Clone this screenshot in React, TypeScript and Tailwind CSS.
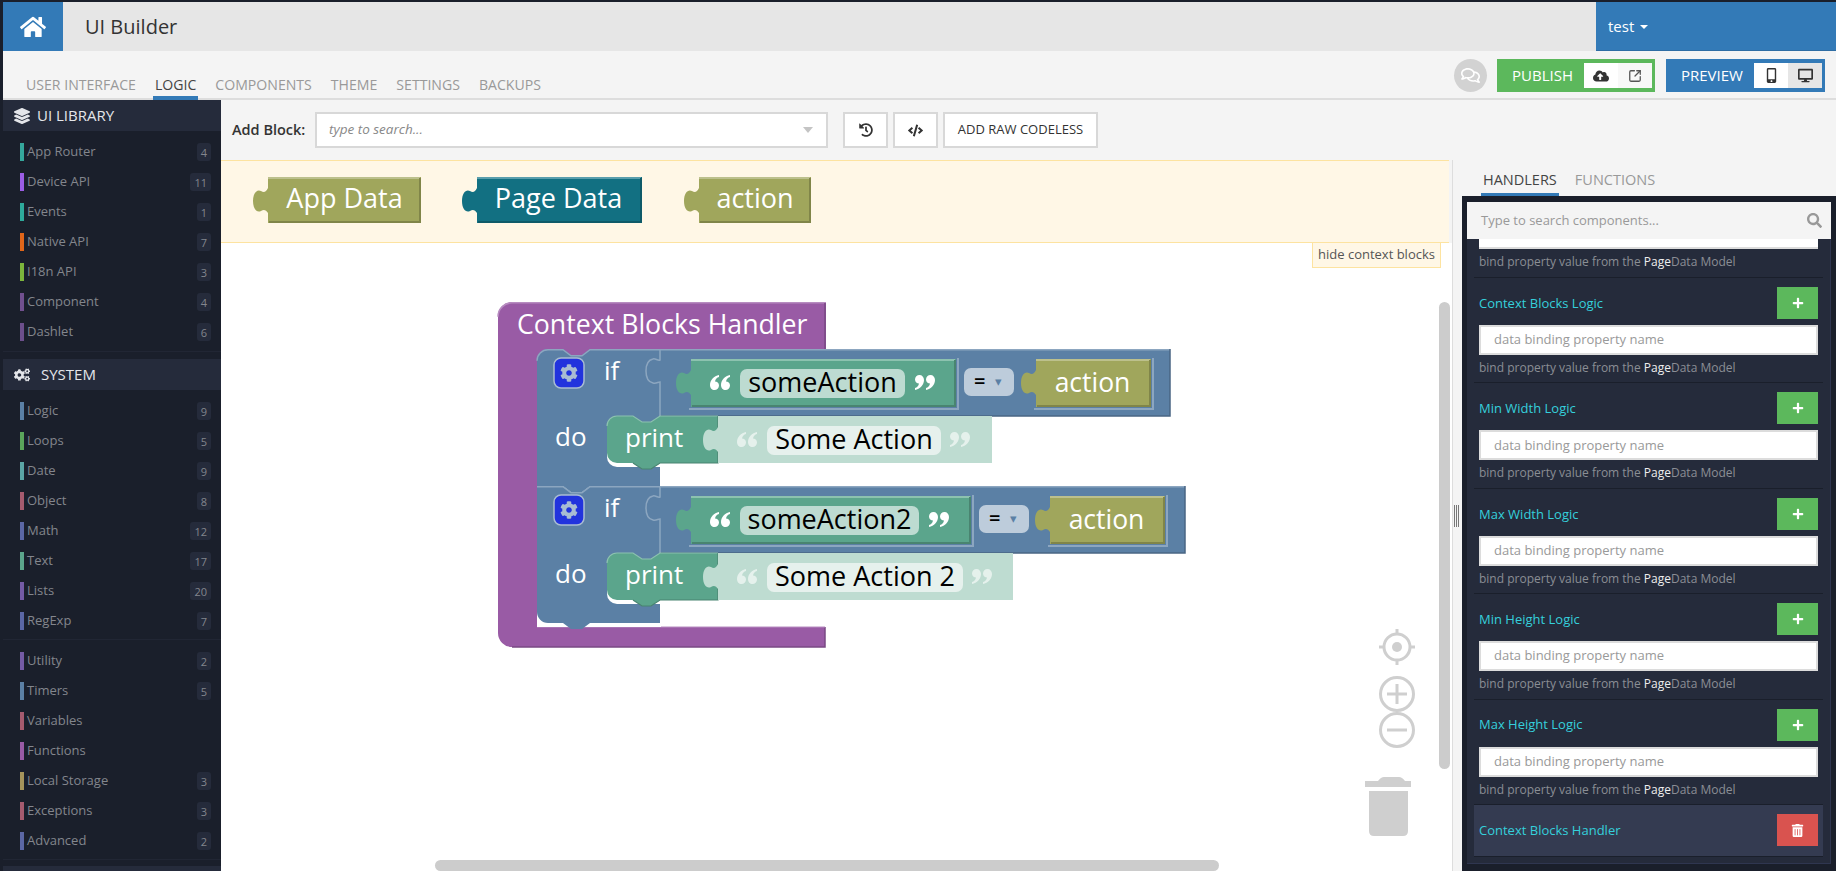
import React from "react";
import {
  FaHome, FaLayerGroup, FaCogs, FaRegComments, FaCloudUploadAlt, FaMobileAlt, FaDesktop,
  FaHistory, FaCode, FaPlus, FaTrashAlt, FaSearch,
} from "react-icons/fa";
import { SquareArrowOutUpRight } from "lucide-react";

const lib = [
  { n: "App Router", b: "4", c: "bg-[#35a79c]" },
  { n: "Device API", b: "11", c: "bg-[#9b5de5]" },
  { n: "Events", b: "1", c: "bg-[#2ea99b]" },
  { n: "Native API", b: "7", c: "bg-[#e0661a]" },
  { n: "I18n API", b: "3", c: "bg-[#7cb53c]" },
  { n: "Component", b: "4", c: "bg-[#71508f]" },
  { n: "Dashlet", b: "6", c: "bg-[#6c4f8c]" },
];
const sys1 = [
  { n: "Logic", b: "9", c: "bg-[#5b80a5]" },
  { n: "Loops", b: "5", c: "bg-[#5ba55b]" },
  { n: "Date", b: "9", c: "bg-[#5ba5a5]" },
  { n: "Object", b: "8", c: "bg-[#a55b6f]" },
  { n: "Math", b: "12", c: "bg-[#5b67a5]" },
  { n: "Text", b: "17", c: "bg-[#5ba58c]" },
  { n: "Lists", b: "20", c: "bg-[#745ba5]" },
  { n: "RegExp", b: "7", c: "bg-[#5b67a5]" },
];
const sys2 = [
  { n: "Utility", b: "2", c: "bg-[#745ba5]" },
  { n: "Timers", b: "5", c: "bg-[#5b80a5]" },
  { n: "Variables", b: "", c: "bg-[#a55b6f]" },
  { n: "Functions", b: "", c: "bg-[#995ba5]" },
  { n: "Local Storage", b: "3", c: "bg-[#a5945b]" },
  { n: "Exceptions", b: "3", c: "bg-[#a55b6f]" },
  { n: "Advanced", b: "2", c: "bg-[#5b67a5]" },
];

function Item({ it }: { it: { n: string; b: string; c: string } }) {
  return (
    <div className="flex items-center pl-[17px] pr-[10px] h-[30px]">
      <span className={`w-[4px] h-[18px] ${it.c}`} />
      <span className="ml-[3px] text-[13px] text-[#83868d] flex-1">{it.n}</span>
      {it.b && (
        <span className="h-[18px] min-w-[13px] px-[4px] rounded-[3px] bg-[#252b3b] text-[11px] leading-[19px] text-center text-[#83868d]">
          {it.b}
        </span>
      )}
    </div>
  );
}

function SideHead({ icon, label, w }: { icon: React.ReactNode; label: string; w: string }) {
  return (
    <div className="h-[31px] bg-[#252b3b] flex items-center pl-[11px] text-[15px] text-[#e4e6ea]">
      <span className={`flex text-[16px] ${w}`}>{icon}</span>
      <span>{label}</span>
    </div>
  );
}

function Sidebar() {
  return (
    <div className="w-[218px] shrink-0 bg-[#1a1f2b] overflow-hidden">
      <SideHead icon={<FaLayerGroup />} label="UI LIBRARY" w="w-[23px]" />
      <div className="pt-[6px] border-b border-[#212634] h-[221px]">
        {lib.map((i) => <Item key={i.n} it={i} />)}
      </div>
      <div className="mt-[7px]">
        <SideHead icon={<FaCogs />} label="SYSTEM" w="w-[27px]" />
      </div>
      <div className="pt-[6px] h-[250px] border-b border-[#212634]">
        {sys1.map((i) => <Item key={i.n} it={i} />)}
      </div>
      <div className="pt-[6px] h-[220px] border-b border-[#212634]">
        {sys2.map((i) => <Item key={i.n} it={i} />)}
      </div>
      <div className="mt-[6px] h-[20px] bg-[#252b3b]" />
    </div>
  );
}

const tabPath = (x: number, y: number) =>
  `V${y + 36} c-2,-3 -4,-4 -7,-2 c-4,2 -8,-2 -8,-10 c0,-8 4,-12 8,-10 c3,2 5,1 7,-3`;

function ValueBlock({ x, y, w, h, fill, light, dark, label, size = 27, socket, dx = 0, dyText = 0 }: {
  x: number; y: number; w: number; h: number; fill: string; light: string; dark: string; label?: string; size?: number; socket?: boolean; dx?: number; dyText?: number;
}) {
  const d = `M${x},${y} H${x + w} V${y + h} H${x} ${tabPath(x, y)} Z`;
  return (
    <g>
      {socket && <path d={`M${x - 2},${y + h + 2} H${x + w + 2} V${y - 1}`} fill="none" stroke="#8ca6c0" strokeWidth="2" />}
      <path d={d} fill={fill} />
      <path d={`M${x},${y + 1} H${x + w - 1}`} stroke={light} strokeWidth="2" />
      <path d={`M${x + 1},${y + h - 1} H${x + w - 1} V${y + 1}`} fill="none" stroke={dark} strokeWidth="2" />
      {label && (
        <text x={x + w / 2 + dx} y={y + h / 2 + size * 0.31 + dyText} textAnchor="middle" fill="#fff" fontSize={size}>{label}</text>
      )}
    </g>
  );
}

/* The quote marks on a Blockly text block are small pictures. */
function Quote({ x, y, open, op = 1 }: { x: number; y: number; open: boolean; op?: number }) {
  const one = "M9,0 C4,1 0,5 0,10 C0,13 2,15 4.5,15 C7,15 9,13 9,10.5 C9,8 7,6.5 5,6.5 C5.5,4 7,2.5 9,2 Z";
  return (
    <g transform={open ? `translate(${x},${y})` : `translate(${x + 20},${y + 15}) rotate(180)`} fill="#fff" opacity={op}>
      <path d={one} />
      <path d={one} transform="translate(11,0)" />
    </g>
  );
}

function Chip({ x, y, w, fill, label, h = 29 }: { x: number; y: number; w: number; fill: string; label: string; h?: number }) {
  return (
    <g>
      <rect x={x} y={y} width={w} height={h} rx="7" fill={fill} />
      <text x={x + w / 2} y={y + 23} textAnchor="middle" fill="#000" fontSize="27">{label}</text>
    </g>
  );
}

function IfRow({ dy, strEnd, chipW, label, ddX, actX, actW, right, printLabel, lightEnd, chip2W, last }: {
  dy: number; strEnd: number; chipW: number; label: string; ddX: number; actX: number; actW: number; right: number;
  printLabel: string; lightEnd: number; chip2W: number; last?: boolean;
}) {
  const T = 349 + dy;
  const bot = last ? 623 : 486 + dy;
  const tail = last
    ? `V${bot} H590 l-8,6 h-11 l-8,-6 H548 a11,11 0 0 1 -11,-11`
    : `V${bot} H590 l-8,6 h-11 l-8,-6 H537`;
  const head = last ? `M537,${T} H563` : `M537,${T + 11} a11,11 0 0 1 11,-11 H563`;
  const blue = `${head} l8,6 h11 l8,-6 H${right} V${T + 67} H660 ${tail} Z`;
  const pT = 416 + dy;
  const strW = strEnd - 691;
  return (
    <g>
      <path d={blue} fill="#5b80a5" />
      <path d={`${head} l8,6 h11 l8,-6 H${right}`} fill="none" stroke="#8ca6c0" strokeWidth="1.5" transform="translate(0,0.75)" />
      <path d={`M660,${pT} H${right} V${T}`} fill="none" stroke="#496684" strokeWidth="1.5" />
      <path d={`M660,${T} V${T + 11} c-2,1 -5,-2 -7,-1 c-5,1 -7,5 -7,12 c0,7 2,11 7,12 c3,1 5,-1 7,-1 V${pT}`} fill="none" stroke="#8ca6c0" strokeWidth="1.5" />
      <rect x="554" y={T + 9} width="30" height="30" rx="7" fill="#2233dd" stroke="#a9bcd2" strokeWidth="1.5" />
      <g transform={`translate(560,${T + 15})`} color="#a9bcd2"><GearIcon /></g>
      <text x="604" y={T + 31} fill="#fff" fontSize="26">if</text>
      <text x="555" y={T + 97} fill="#fff" fontSize="26">do</text>

      <ValueBlock x={691} y={T + 10} w={strW} h={48} fill="#5ba58c" light="#8cc2af" dark="#498470" socket />
      <Quote x={710} y={T + 26} open />
      <Chip x={740} y={T + 20} w={chipW} fill="#bddbd1" label={label} />
      <Quote x={740 + chipW + 10} y={T + 26} open={false} />

      <rect x={ddX} y={T + 19} width="50" height="28" rx="7" fill="#bdccdb" />
      <text x={ddX + 10} y={T + 39} fill="#000" fontSize="20" fontWeight="600">=</text>
      <text x={ddX + 31} y={T + 37} fill="#5b80a5" fontSize="13">▾</text>

      <ValueBlock x={actX} y={T + 10} w={actW} h={48} fill="#a0a65c" light="#bcc08c" dark="#808549" label="action" size={26.5} socket dyText={1} dx={-1} />

      <path d={`M607,${pT + 30} V${pT + 41} a10,10 0 0 0 10,10 H660 V${pT + 30} Z`} fill="#fff" />
      <path d={`M607,${pT + 10} a10,10 0 0 1 10,-10 H633 l9,6 h9 l9,-6 H718 V${pT + 47} H660 l-9,6 h-9 l-9,-6 H617 a10,10 0 0 1 -10,-10 Z`} fill="#5ba58c" />
      <path d={`M607,${pT + 10} a10,10 0 0 1 10,-10 H633 l9,6 h9 l9,-6 H718`} fill="none" stroke="#8cc2af" strokeWidth="1.2" />
      <path d={`M718,${pT} V${pT + 47} H660 l-9,6 h-9 l-9,-6`} fill="none" stroke="#498470" strokeWidth="1.2" />
      <text x="625" y={pT + 31} fill="#fff" fontSize="26">print</text>
      <path d={`M718,${pT} H${lightEnd} V${pT + 47} H718 ${tabPath(718, pT)} Z`} fill="#bedcd1" />
      <Quote x={737} y={pT + 16} open op={0.6} />
      <Chip x={767} y={pT + 10} w={chip2W} fill="#e6f1ed" label={printLabel} />
      <Quote x={767 + chip2W + 9} y={pT + 16} open={false} op={0.6} />
    </g>
  );
}

function GearIcon() {
  return (
    <svg x="0" y="0" width="18" height="18" viewBox="0 0 512 512" fill="currentColor">
      <path d="M487.4 315.7l-42.6-24.6c4.3-23.2 4.3-47 0-70.2l42.6-24.6c4.9-2.8 7.1-8.6 5.5-14-11.1-35.6-30-67.8-54.7-94.6-3.8-4.1-10-5.1-14.8-2.3L380.8 110c-17.9-15.4-38.5-27.3-60.8-35.1V25.8c0-5.6-3.9-10.5-9.4-11.7-36.7-8.2-74.3-7.8-109.2 0-5.5 1.2-9.4 6.1-9.4 11.7V75c-22.2 7.9-42.8 19.8-60.8 35.1L88.7 85.5c-4.9-2.8-11-1.9-14.8 2.3-24.7 26.7-43.6 58.9-54.7 94.6-1.7 5.4.6 11.2 5.5 14L67.3 221c-4.3 23.2-4.3 47 0 70.2l-42.6 24.6c-4.9 2.8-7.1 8.6-5.5 14 11.1 35.6 30 67.8 54.7 94.6 3.8 4.1 10 5.1 14.8 2.3l42.6-24.6c17.9 15.4 38.5 27.3 60.8 35.1v49.2c0 5.6 3.9 10.5 9.4 11.7 36.7 8.2 74.3 7.8 109.2 0 5.5-1.2 9.4-6.1 9.4-11.7v-49.2c22.2-7.9 42.8-19.8 60.8-35.1l42.6 24.6c4.9 2.8 11 1.9 14.8-2.3 24.7-26.7 43.6-58.9 54.7-94.6 1.5-5.5-.7-11.3-5.6-14.1zM256 336c-44.1 0-80-35.9-80-80s35.9-80 80-80 80 35.9 80 80-35.9 80-80 80z" />
    </svg>
  );
}

function Canvas() {
  return (
    <div className="relative flex-1 bg-white overflow-hidden">
      <svg width="1231" height="628" viewBox="221 243 1231 628" className="block font-['Open_Sans']">
        <path d="M498,316 a14,14 0 0 1 14,-14 H826 V349 H600 V358 H548 V362 H537 V627 H825 V647 H512 a14,14 0 0 1 -14,-14 Z" fill="#995ba5" />
        <path d="M498,316 a14,14 0 0 1 14,-14 H826" fill="none" stroke="#b78cc0" strokeWidth="1.5" transform="translate(0,0.75)" />
        <path d="M825,303 V349 M825,627 V647 H512" fill="none" stroke="#7a4984" strokeWidth="1.5" />
        <path d="M537,627 H825" stroke="#b78cc0" strokeWidth="1" />
        <text x="517" y="334" fill="#fff" fontSize="26.7">Context Blocks Handler</text>
        <rect x="537" y="600" width="124" height="27" fill="#fff" />
        <IfRow dy={0} strEnd={956} chipW={165} label="someAction" ddX={964} actX={1036} actW={115} right={1170}
          printLabel="Some Action" lightEnd={992} chip2W={174} />
        <IfRow dy={137} strEnd={971} chipW={179} label="someAction2" ddX={979} actX={1050} actW={115} right={1185}
          printLabel="Some Action 2" lightEnd={1013} chip2W={196} last />
        <g fill="none" stroke="#cfcfcf" strokeWidth="3">
          <circle cx="1397" cy="647" r="13" />
          <path d="M1397,629 V634 M1397,660 V665 M1379,647 H1384 M1410,647 H1415" />
          <circle cx="1397" cy="694" r="16.5" />
          <path d="M1387,694 H1407 M1397,684 V704" />
          <circle cx="1397" cy="730" r="16.5" />
          <path d="M1387,730 H1407" />
        </g>
        <circle cx="1397" cy="647" r="5" fill="#cfcfcf" />
        <path d="M1365,781 h13 q3,-4 6,-4 h15 q3,0 6,4 h6 v6 h-46 Z M1369,791 h39 v40 q0,5 -5,5 h-29 q-5,0 -5,-5 Z" fill="#cfcfcf" />
        <rect x="1439" y="302" width="11" height="467" rx="5.5" fill="#cccccc" />
        <rect x="435" y="860" width="784" height="11" rx="5.5" fill="#cccccc" />
      </svg>
      <div className="absolute right-[11px] top-0 h-[25px] w-[129px] bg-[#fff7e6] border-x border-b border-[#fde3a0] text-[13px] leading-[23px] text-center text-[#555]">
        hide context blocks
      </div>
    </div>
  );
}

function ContextBar() {
  const P = { light: "#bcc08c", dark: "#808549", fill: "#a0a65c" };
  return (
    <div className="h-[83px] shrink-0 mr-[3px] bg-[#fff7e6] border-y border-[#fde3a0] overflow-hidden">
      <svg width="1228" height="81" viewBox="221 161 1228 81" className="block font-['Open_Sans']">
        <ValueBlock x={268} y={177} w={153} h={46} {...P} label="App Data" />
        <ValueBlock x={477} y={177} w={165} h={46} fill="#127082" light="#5a9eac" dark="#0e5a68" label="Page Data" dx={-1} />
        <ValueBlock x={699} y={177} w={112} h={46} {...P} label="action" />
      </svg>
    </div>
  );
}

function Toolbar() {
  const btn = "h-[36px] bg-white border-2 border-[#d8d8d8] flex items-center justify-center text-[#333]";
  return (
    <div className="h-[60px] shrink-0 flex items-center pl-[11px]">
      <span className="text-[14.5px] font-semibold text-[#333] w-[83px]">Add Block:</span>
      <div className="w-[513px] h-[36px] bg-white border-2 border-[#d8d8d8] flex items-center pl-[12px] pr-[13px]">
        <span className="flex-1 italic text-[13.5px] text-[#888] mb-[1px]">type to search...</span>
        <span className="border-x-[5px] border-t-[6px] border-x-transparent border-t-[#c4c4c4]" />
      </div>
      <div className={`${btn} w-[45px] ml-[15px] text-[14px]`}><FaHistory /></div>
      <div className={`${btn} w-[45px] ml-[5px] text-[15px]`}><FaCode /></div>
      <div className={`${btn} w-[155px] ml-[5px] text-[13px]`}>ADD RAW CODELESS</div>
    </div>
  );
}

function Row({ title }: { title: string }) {
  return (
    <div className="h-[105.4px] mx-[7px] px-[5px] pt-[9px] border-b border-[#1a1f2b]">
      <div className="flex items-center justify-between h-[32px]">
        <span className="text-[13px] text-[#35d0dc] mt-[1px]">{title}</span>
        <span className="w-[41px] h-[32px] bg-[#5cb85c] flex items-center justify-center text-white text-[12px]"><FaPlus /></span>
      </div>
      <div className="mt-[6px] h-[30px] bg-white border-2 border-[#dcdcdc] flex items-center pl-[13px] text-[13px] text-[#999]">
        data binding property name
      </div>
      <Help />
    </div>
  );
}

function Help() {
  return (
    <div className="mt-[4px] text-[12px] leading-[17px] text-[#8b8e95]">
      bind property value from the <span className="text-[#eee]">Page</span>Data Model
    </div>
  );
}

function RightPanel() {
  return (
    <div className="w-[384px] shrink-0 flex flex-col border-l-[1px] border-[#dddddd] mt-[60px]">
      <div className="h-[36px] flex items-end pl-[29px] gap-[16px] text-[14.5px]">
        <span className="h-[36px] pt-[9px] px-[2px] text-[#444] border-b-[3px] border-[#337ab7] ml-[-1px]">HANDLERS</span>
        <span className="h-[36px] pt-[9px] text-[#999]">FUNCTIONS</span>
      </div>
      <div className="flex-1 ml-[9px] bg-[#1a1f2b] px-[5px] pt-[6px] pb-[7px] flex flex-col min-h-0">
        <div className="h-[37px] shrink-0 bg-[#f4f4f4] flex items-center pl-[14px] pr-[9px] text-[13px] text-[#999]">
          <span className="flex-1">Type to search components...</span>
          <FaSearch className="text-[#999] text-[15px]" />
        </div>
        <div className="flex-1 bg-[#252b3b] border-r border-b border-[#2f3650] overflow-hidden">
          <div className="h-[39px] mx-[7px] px-[5px] border-b border-[#1a1f2b] overflow-hidden">
            <div className="h-[10px] bg-white border-b-2 border-[#dcdcdc]" />
            <Help />
          </div>
          {["Context Blocks Logic", "Min Width Logic", "Max Width Logic", "Min Height Logic", "Max Height Logic"].map((t) => (
            <Row key={t} title={t} />
          ))}
          <div className="h-[52px] mx-[7px] px-[5px] bg-[#343b51] border-b border-[#1a1f2b] flex items-center justify-between">
            <span className="text-[13px] text-[#35d0dc]">Context Blocks Handler</span>
            <span className="w-[41px] h-[32px] bg-[#d9534f] flex items-center justify-center text-white text-[13px]"><FaTrashAlt /></span>
          </div>
        </div>
      </div>
    </div>
  );
}

export default function App() {
  return (
    <div className="w-[1836px] h-[871px] overflow-hidden bg-[#1a1f2b] pt-[2px] pl-[3px] flex flex-col font-['Open_Sans',sans-serif]">
      <div className="h-[49px] shrink-0 bg-[#e6e6e6] flex items-stretch">
        <div className="w-[60px] bg-[#337ab7] flex items-center justify-center text-white text-[26px]"><FaHome /></div>
        <div className="flex-1 pl-[22px] flex items-center text-[20px] text-[#333]">UI Builder</div>
        <div className="w-[240px] bg-[#337ab7] border-b border-[#2e6da4] pl-[12px] flex items-center text-[15px] text-white">
          test
          <span className="ml-[6px] mt-[2px] border-x-[4px] border-t-[4px] border-x-transparent border-t-white" />
        </div>
      </div>
      <div className="h-[49px] shrink-0 bg-[#f4f4f4] border-b-2 border-[#dddddd] flex items-stretch pl-[21px] pr-[11px] relative">
        <div className="flex items-end gap-[15px] text-[14.1px] text-[#999]">
          {["USER INTERFACE", "LOGIC", "COMPONENTS", "THEME", "SETTINGS", "BACKUPS"].map((t) =>
            t === "LOGIC" ? (
              <span key={t} className="h-[38px] pt-[12px] px-[2px] text-[#444] border-b-[4px] border-[#337ab7] mb-[-2px]">{t}</span>
            ) : (
              <span key={t} className="h-[36px] pt-[12px] px-[2px]">{t}</span>
            ),
          )}
        </div>
        <div className="flex-1" />
        <div className="flex items-center gap-[11px] mt-[2px]">
          <span className="w-[33px] h-[33px] rounded-full bg-[#d2d2d2] flex items-center justify-center text-white text-[19px] mr-[-1px]"><FaRegComments /></span>
          <div className="h-[33px] w-[158px] bg-[#5cb85c] pl-[15px] pr-[3px] py-[4px] flex items-stretch text-white text-[15px]">
            <span className="flex-1 flex items-center">PUBLISH</span>
            <span className="w-[34px] bg-white flex items-center justify-center text-[#333] text-[16px]"><FaCloudUploadAlt /></span>
            <span className="w-[34px] bg-[#f8f8f8] flex items-center justify-center text-[#555]"><SquareArrowOutUpRight size={14} strokeWidth={2.2} /></span>
          </div>
          <div className="h-[33px] w-[159px] bg-[#337ab7] pl-[15px] pr-[3px] py-[4px] flex items-stretch text-white text-[15px]">
            <span className="flex-1 flex items-center">PREVIEW</span>
            <span className="w-[34px] bg-white flex items-center justify-center text-[#333] text-[15px]"><FaMobileAlt /></span>
            <span className="w-[34px] bg-[#e6e6e6] flex items-center justify-center text-[#333] text-[15px]"><FaDesktop /></span>
          </div>
        </div>
      </div>
      <div className="flex-1 flex min-h-0">
        <Sidebar />
        <div className="flex-1 flex bg-[#f4f4f4] min-w-0">
          <div className="w-[1231px] shrink-0 flex flex-col">
            <Toolbar />
            <ContextBar />
            <Canvas />
          </div>
          <div className="relative flex">
            <div className="absolute left-[2px] top-[405px] w-[7px] h-[22px] flex gap-[1px]">
              <span className="w-[1px] h-full bg-[#777]" />
              <span className="w-[1px] h-full bg-[#777]" />
              <span className="w-[1px] h-full bg-[#777]" />
            </div>
            <RightPanel />
          </div>
        </div>
      </div>
    </div>
  );
}
